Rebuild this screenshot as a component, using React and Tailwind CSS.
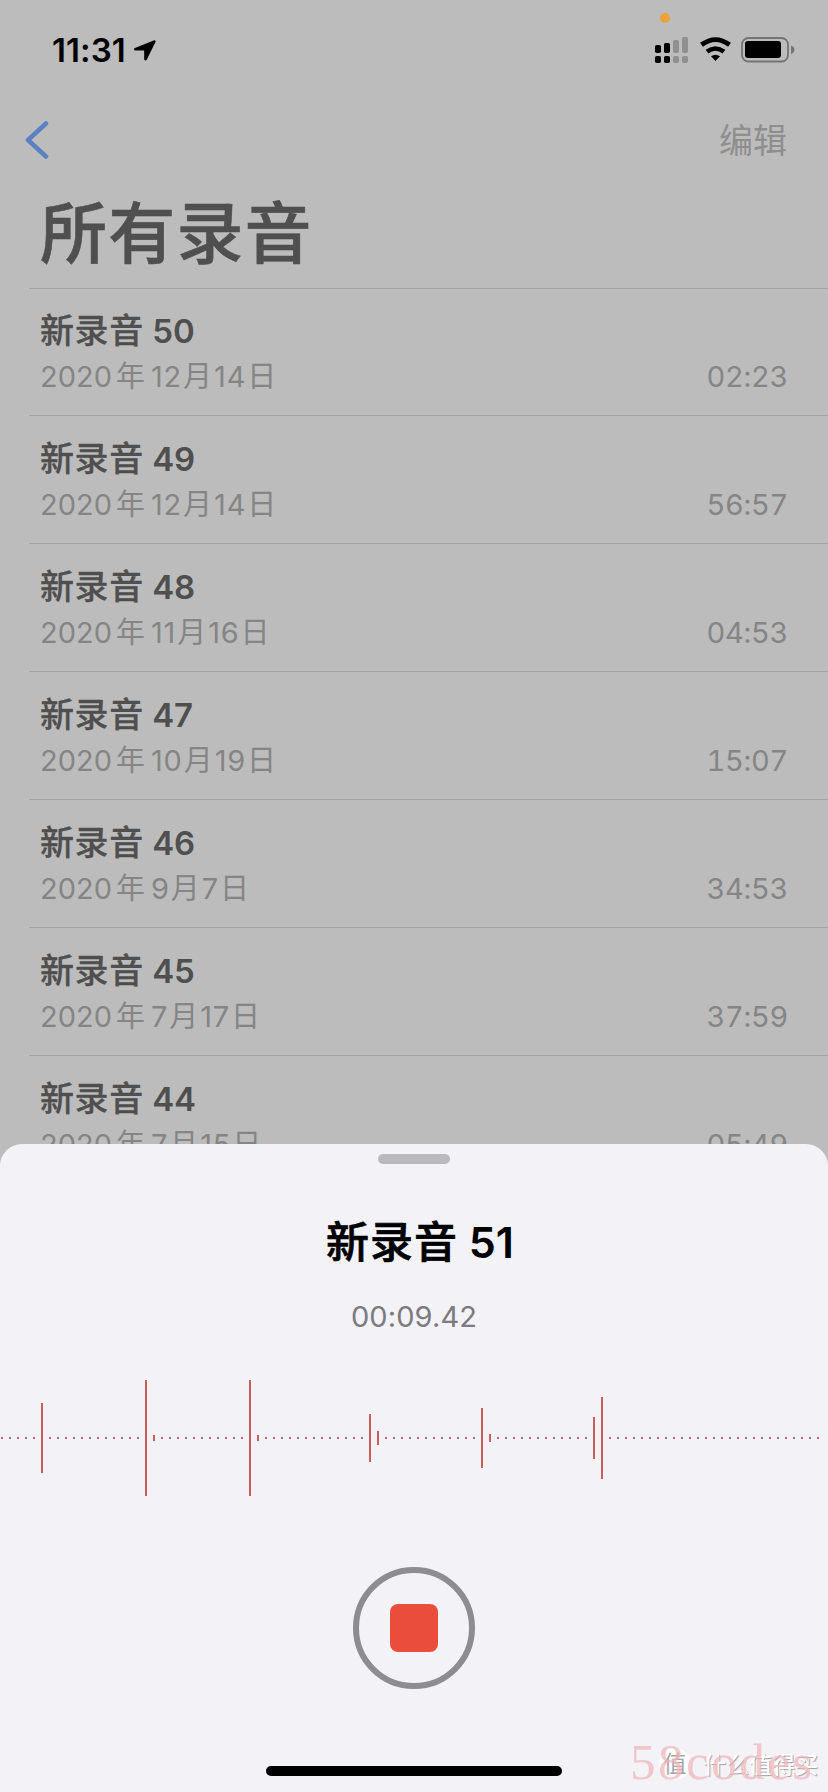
import React from "react";

const recordings = [
  { n: "50", y: "2020", m: "12", d: "14", t: "02:23" },
  { n: "49", y: "2020", m: "12", d: "14", t: "56:57" },
  { n: "48", y: "2020", m: "11", d: "16", t: "04:53" },
  { n: "47", y: "2020", m: "10", d: "19", t: "15:07" },
  { n: "46", y: "2020", m: "9", d: "7", t: "34:53" },
  { n: "45", y: "2020", m: "7", d: "17", t: "37:59" },
  { n: "44", y: "2020", m: "7", d: "15", t: "05:49" },
];

// Bars that rise above the dotted baseline: [x, half height]
const peaks = [
  [42, 35], [146, 58], [154, 3], [250, 58], [258, 3], [370, 24],
  [378, 7], [482, 30], [490, 4], [594, 21], [602, 41],
];
const peakXs = peaks.map((p) => p[0]);
const dots = Array.from({ length: 103 }, (_, i) => 2 + i * 8).filter((x) => x < 820 && !peakXs.includes(x));

function StatusBar() {
  return (
    <header className="flex h-[100px] shrink-0 items-start justify-between pl-[52px] pr-[33px]">
      <div className="flex items-center gap-[8px] pt-[30px]">
        <span className="text-[33px] leading-[40px] font-semibold tracking-[0.1px] text-black">11:31</span>
        <svg width="22" height="21" viewBox="0 0 22 21">
          <path d="M20 1 1.200 8.600C.3 9 .6 9.800 1.400 9.800H10.800V19C10.800 20 11.800 20.200 12.300 19.300L20.900 1.800C21.200 1.100 20.700.7 20 1Z" fill="#000" stroke="#000" strokeWidth="1.200" strokeLinejoin="round" />
        </svg>
      </div>
      <svg width="142" height="70" viewBox="653 0 142 70">
        <circle cx="665" cy="18" r="5" fill="#e9a23c" />
        <g fill="#000">
          <rect x="655" y="45" width="6" height="8" rx="1.800" />
          <rect x="664" y="43" width="6" height="10" rx="1.800" />
          <rect x="655" y="56" width="6" height="7" rx="1.800" />
          <rect x="664" y="56" width="6" height="7" rx="1.800" />
        </g>
        <g fill="#909090">
          <rect x="673" y="40" width="6" height="13" rx="1.800" />
          <rect x="682" y="37" width="6" height="16" rx="1.800" />
          <rect x="673" y="56" width="6" height="7" rx="1.800" />
          <rect x="682" y="56" width="6" height="7" rx="1.800" />
        </g>
        <path d="M701.500 44.800Q715.500 34.400 729.500 44.800" fill="none" stroke="#000" strokeWidth="4.800" />
        <path d="M707 51.600Q715.500 45.400 724 51.600" fill="none" stroke="#000" strokeWidth="4.600" />
        <path d="M711 56.300Q715.500 53 720 56.300L715.500 61Z" fill="#000" />
        <rect x="742" y="38" width="46" height="23.500" rx="6.500" fill="none" stroke="#747474" strokeWidth="1.800" />
        <rect x="745" y="41" width="36" height="17" rx="3" fill="#000" />
        <path d="M791 45.500Q794.500 47 794.500 49.700T791 54Z" fill="#747474" />
      </svg>
    </header>
  );
}

function Recording({ item }) {
  return (
    <li className="ml-[29px] h-32 border-t border-[#a2a2a2] pl-[11px] pr-[40px] pt-[22px] first:h-[127px] first:pt-[21px]">
      <h2 className="text-[33px] leading-[42px] font-semibold text-[#4f4f4f]">
        <span className="text-[34px] font-medium tracking-[0.6px] [-webkit-text-stroke:0.3px_#4f4f4f]">新录音</span> {item.n}
      </h2>
      <div className="mt-[3px] flex justify-between text-[29px] leading-[44px] text-[#858585]">
        <p className="flex">
          <span>{item.y}</span>
          <span className="mr-[6px] ml-[4px]">年</span>
          <span className="tracking-[0.8px]">{item.m}</span>
          <span className="mr-[2px] ml-[1px]">月</span>
          <span className="tracking-[0.8px]">{item.d}</span>
          <span className="ml-px">日</span>
        </p>
        <time className="tracking-[-0.3px] tabular-nums">{item.t}</time>
      </div>
    </li>
  );
}

function Waveform() {
  return (
    <svg width="828" height="120" viewBox="0 1378 828 120" shapeRendering="crispEdges">
      {dots.map((x) => (
        <rect key={x} x={x - 1} y="1437" width="2" height="2" fill="#c26478" />
      ))}
      {peaks.map(([x, h]) => (
        <rect key={x} x={x - 1} y={1438 - h} width="2" height={h * 2} fill="#c85f5a" />
      ))}
    </svg>
  );
}

export default function App() {
  return (
    <div className="relative h-[1792px] w-[828px] overflow-hidden bg-[#bcbcbc] font-['Inter','Noto_Sans_CJK_SC',sans-serif]">
      <div className="flex h-[1144px] flex-col overflow-hidden">
        <StatusBar />
        <nav className="flex h-20 shrink-0 items-center justify-between pl-[25px] pr-[41px]">
          <svg width="24" height="40" viewBox="0 0 24 40" fill="none" stroke="#5b82c0" strokeWidth="4.500" strokeLinecap="round" strokeLinejoin="round">
            <path d="M21 3.500 3 20 21 36.500" />
          </svg>
          <button className="pt-[2px] text-[34px] leading-[44px] text-[#8e8e8e]">编辑</button>
        </nav>
        <h1 className="h-[108px] shrink-0 pt-px pl-[40px] text-[67px] leading-[106px] font-medium tracking-[1.2px] text-[#4f4f4f] [-webkit-text-stroke:0.6px_#4f4f4f]">所有录音</h1>
        <ul className="shrink-0">
          {recordings.map((r) => (
            <Recording key={r.n} item={r} />
          ))}
        </ul>
      </div>
      <div className="h-[648px] bg-[#bcbcbc]">
        <section className="flex h-full flex-col items-center rounded-t-[22px] bg-[#f2f2f7] pt-[10px]">
          <div className="h-[10px] w-[72px] rounded-full bg-[#b9b9be]" />
          <h2 className="mt-[48px] ml-[12px] text-[43px] leading-[60px] font-semibold text-black">
            <span className="font-medium tracking-[1px] [-webkit-text-stroke:0.7px_#000]">新录音</span> 51
          </h2>
          <p className="mt-[27px] text-[29px] leading-[36px] tracking-[0.1px] text-[#7b7b80]">00:09.42</p>
          <div className="mt-[43px]">
            <Waveform />
          </div>
          <button className="mt-[69px] flex size-[122px] items-center justify-center rounded-full border-6 border-[#8c8c91]">
            <span className="size-12 rounded-[8px] bg-[#eb4d3d]" />
          </button>
          <div className="mt-[77px] h-[10px] w-[296px] rounded-full bg-black" />
        </section>
      </div>
      <div className="absolute top-[1732px] left-[628px] h-[60px] w-[200px]">
        <span className="absolute top-[16px] left-[31px] flex size-[32px] items-center justify-center rounded-full bg-white/80 text-[23px] text-[#a5a5a8]">值</span>
        <span className="absolute top-[18px] left-[75px] text-[23px] leading-[30px] font-medium whitespace-nowrap text-white [text-shadow:1px_1px_1px_#a0a0a6]">什么值得买</span>
        <span className="absolute top-0 left-[2px] font-['Liberation_Serif',serif] text-[51px] leading-[60px] tracking-[2.5px] text-[#efb4b8]/70">58codes</span>
      </div>
    </div>
  );
}
